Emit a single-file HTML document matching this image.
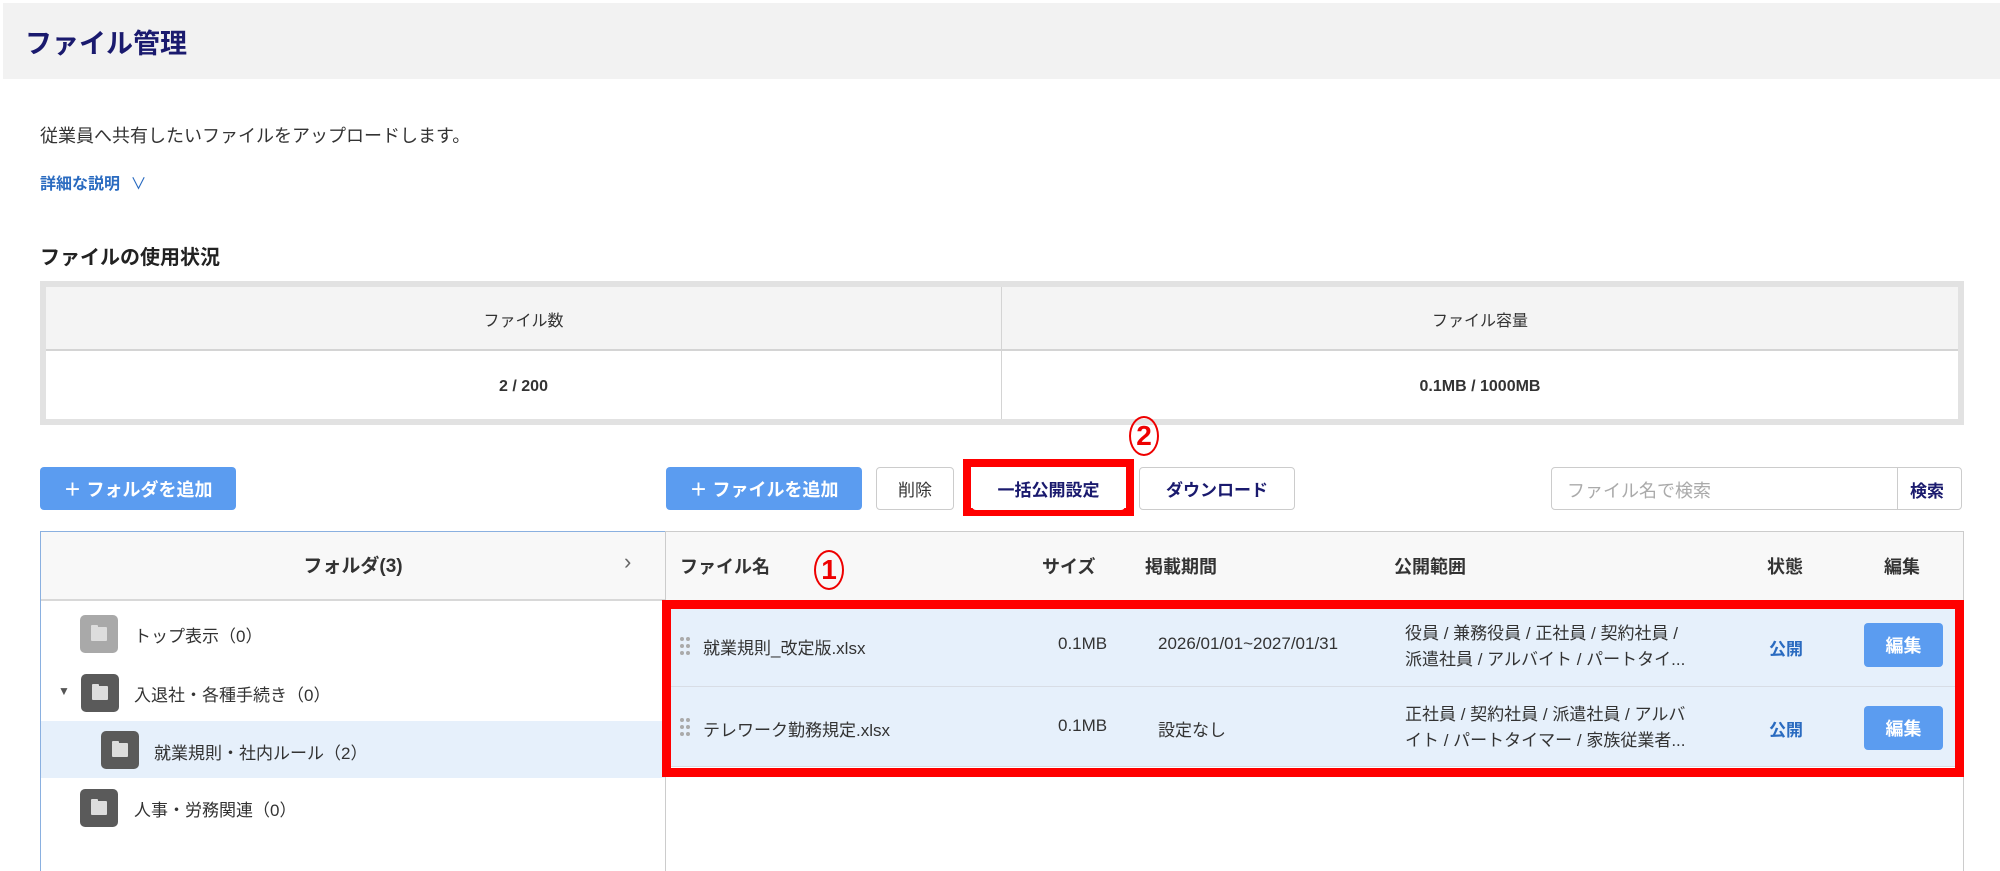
<!DOCTYPE html>
<html><head><meta charset="utf-8"><style>
*{box-sizing:border-box;margin:0;padding:0}
body{width:2000px;height:866px;overflow:hidden;background:#fff;font-family:"Liberation Sans","Noto Sans CJK JP",sans-serif;color:#333;position:relative}
.a{position:absolute;white-space:nowrap}
.btnb{position:absolute;background:#5b9cf0;color:#fff;font-weight:bold;font-size:18px;border-radius:4px;display:flex;align-items:center;justify-content:center}
.btnw{position:absolute;background:#fff;border:1px solid #ccc;border-radius:4px;display:flex;align-items:center;justify-content:center;font-size:17px}
.fi{position:absolute;width:38px;height:38px;border-radius:5px;background:#5a5a5a}
.fi::after{content:"";position:absolute;left:11px;top:12px;width:16px;height:14px;background:#ddd;border-radius:1px}
.fi::before{content:"";position:absolute;left:11px;top:10px;width:7px;height:3px;background:#ddd;border-radius:1px}
.row{position:absolute;left:670px;width:1290px;background:#e6f0fb;border-bottom:1px solid #d8dde5}
.circ{position:absolute;width:30px;height:40px;border:2px solid #e00;border-radius:50%;color:#e00;font-weight:bold;font-size:28px;display:flex;align-items:center;justify-content:center}
.dots{position:absolute;width:10px;height:18px}
.dots i{position:absolute;width:4px;height:4px;border-radius:50%;background:#aaa}
</style></head><body>
<div class="a" style="left:3px;top:3px;width:1997px;height:76px;background:#f2f2f2"></div>
<div class="a" style="left:25px;top:22px;font-size:27px;font-weight:bold;color:#1a1a6e">ファイル管理</div>
<div class="a" style="left:40px;top:122px;font-size:18px">従業員へ共有したいファイルをアップロードします。</div>
<div class="a" style="left:40px;top:170px;font-size:16px;font-weight:bold;color:#2a6bc0">詳細な説明 <span style="font-weight:normal;margin-left:6px">&#8744;</span></div>
<div class="a" style="left:40px;top:241px;font-size:20px;font-weight:bold;color:#222">ファイルの使用状況</div>

<div class="a" style="left:40px;top:281px;width:1924px;height:144px;border:6px solid #e2e2e2;background:#fff">
 <div class="a" style="left:0;top:0;width:1912px;height:64px;background:#f4f4f4;border-bottom:2px solid #d4d4d4"></div>
 <div class="a" style="left:955px;top:0;width:1px;height:132px;background:#d4d4d4"></div>
 <div class="a" style="left:0;top:20px;width:955px;text-align:center;font-size:16px">ファイル数</div>
 <div class="a" style="left:956px;top:20px;width:956px;text-align:center;font-size:16px">ファイル容量</div>
 <div class="a" style="left:0;top:91px;width:955px;text-align:center;font-size:16px;font-weight:bold">2 / 200</div>
 <div class="a" style="left:956px;top:91px;width:956px;text-align:center;font-size:16px;font-weight:bold">0.1MB / 1000MB</div>
</div>

<div class="btnb" style="left:40px;top:467px;width:196px;height:43px">＋ フォルダを追加</div>
<div class="btnb" style="left:666px;top:467px;width:196px;height:43px">＋ ファイルを追加</div>
<div class="btnw" style="left:876px;top:467px;width:78px;height:43px">削除</div>
<div class="a" style="left:963px;top:459px;width:171px;height:57px;border:8px solid #f00"></div>
<div class="btnw" style="left:972px;top:467px;width:153px;height:43px;font-weight:bold;color:#1a1a6e;border:none">一括公開設定</div>
<div class="btnw" style="left:1139px;top:467px;width:156px;height:43px;font-weight:bold;color:#1a1a6e">ダウンロード</div>
<div class="circ" style="left:1129px;top:416px">2</div>
<div class="a" style="left:1551px;top:467px;width:411px;height:43px;border:1px solid #ccc;border-radius:4px;background:#fff"></div>
<div class="a" style="left:1897px;top:467px;width:1px;height:43px;background:#ccc"></div>
<div class="a" style="left:1567px;top:477px;font-size:18px;color:#aaa">ファイル名で検索</div>
<div class="a" style="left:1910px;top:477px;font-size:17px;font-weight:bold;color:#1a1a6e">検索</div>

<div class="a" style="left:40px;top:531px;width:626px;height:340px;border:1px solid #8ab0e0;border-bottom:none"></div>
<div class="a" style="left:41px;top:532px;width:624px;height:69px;background:#f8f8f8;border-bottom:2px solid #d8d8d8"></div>
<div class="a" style="left:41px;top:551px;width:624px;text-align:center;font-size:19px;font-weight:bold">フォルダ(3)</div>
<div class="a" style="left:624px;top:549px;font-size:22px;color:#666">&#8250;</div>
<div class="a" style="left:665px;top:531px;width:1299px;height:340px;border:1px solid #ccc;border-bottom:none"></div>
<div class="a" style="left:666px;top:532px;width:1297px;height:69px;background:#f8f8f8;border-bottom:1px solid #ddd"></div>
<div class="a" style="left:680px;top:553px;font-size:18px;font-weight:bold">ファイル名</div>
<div class="circ" style="left:814px;top:550px">1</div>
<div class="a" style="left:1042px;top:553px;font-size:18px;font-weight:bold">サイズ</div>
<div class="a" style="left:1145px;top:553px;font-size:18px;font-weight:bold">掲載期間</div>
<div class="a" style="left:1394px;top:553px;font-size:18px;font-weight:bold">公開範囲</div>
<div class="a" style="left:1767px;top:553px;font-size:18px;font-weight:bold">状態</div>
<div class="a" style="left:1884px;top:553px;font-size:18px;font-weight:bold">編集</div>

<div class="a" style="left:41px;top:721px;width:624px;height:57px;background:#e6f0fb"></div>
<div class="fi" style="left:80px;top:615px;background:#a9a9a9"></div>
<div class="a" style="left:134px;top:622px;font-size:17px">トップ表示（0）</div>
<div class="a" style="left:58px;top:684px;font-size:12px;color:#555">&#9660;</div>
<div class="fi" style="left:81px;top:674px"></div>
<div class="a" style="left:134px;top:681px;font-size:17px">入退社・各種手続き（0）</div>
<div class="fi" style="left:101px;top:731px"></div>
<div class="a" style="left:154px;top:739px;font-size:17px">就業規則・社内ルール（2）</div>
<div class="fi" style="left:80px;top:789px"></div>
<div class="a" style="left:134px;top:796px;font-size:17px">人事・労務関連（0）</div>

<div class="row" style="top:609px;height:78px"></div>
<div class="row" style="top:687px;height:80px"></div>
<div class="a" style="left:662px;top:600px;width:1302px;height:177px;border:9px solid #f00"></div>
<div class="dots" style="left:680px;top:637px"><i style="left:0;top:0"></i><i style="left:6px;top:0"></i><i style="left:0;top:7px"></i><i style="left:6px;top:7px"></i><i style="left:0;top:14px"></i><i style="left:6px;top:14px"></i></div>
<div class="a" style="left:703px;top:634px;font-size:17px">就業規則_改定版.xlsx</div>
<div class="a" style="left:1058px;top:634px;font-size:17px">0.1MB</div>
<div class="a" style="left:1158px;top:634px;font-size:17px">2026/01/01~2027/01/31</div>
<div class="a" style="left:1405px;top:621px;font-size:17px;line-height:26px">役員 / 兼務役員 / 正社員 / 契約社員 /<br>派遣社員 / アルバイト / パートタイ...</div>
<div class="a" style="left:1769px;top:635px;font-size:17px;font-weight:bold;color:#2a6bc0">公開</div>
<div class="btnb" style="left:1864px;top:623px;width:79px;height:44px">編集</div>
<div class="dots" style="left:680px;top:718px"><i style="left:0;top:0"></i><i style="left:6px;top:0"></i><i style="left:0;top:7px"></i><i style="left:6px;top:7px"></i><i style="left:0;top:14px"></i><i style="left:6px;top:14px"></i></div>
<div class="a" style="left:703px;top:716px;font-size:17px">テレワーク勤務規定.xlsx</div>
<div class="a" style="left:1058px;top:716px;font-size:17px">0.1MB</div>
<div class="a" style="left:1158px;top:716px;font-size:17px">設定なし</div>
<div class="a" style="left:1405px;top:702px;font-size:17px;line-height:26px">正社員 / 契約社員 / 派遣社員 / アルバ<br>イト / パートタイマー / 家族従業者...</div>
<div class="a" style="left:1769px;top:716px;font-size:17px;font-weight:bold;color:#2a6bc0">公開</div>
<div class="btnb" style="left:1864px;top:706px;width:79px;height:44px">編集</div>
</body></html>
